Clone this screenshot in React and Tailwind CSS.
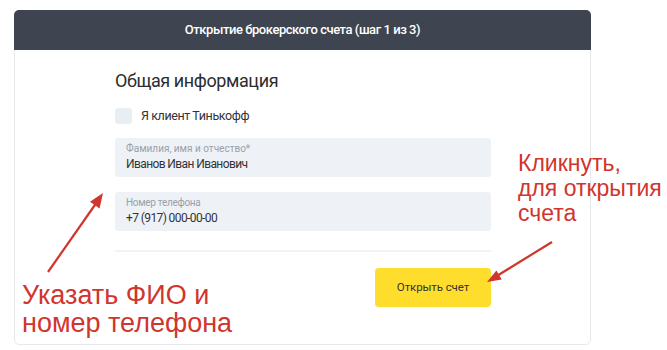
export default function App() {
  return (
    <div className="relative h-[350px] w-[667px] overflow-hidden bg-white pl-[14px] pt-[10px] font-['Roboto',sans-serif]">
      <div className="flex h-[335px] w-[577px] flex-col rounded-[5px] border border-[#e6e8eb] bg-white">
        <div className="-mx-px -mt-px flex h-[40px] items-center justify-center rounded-t-[5px] bg-[#3e4450]">
          <span className="text-[13px] font-medium tracking-[-0.45px] text-white">
            Открытие брокерского счета (шаг 1 из 3)
          </span>
        </div>

        <div className="flex w-[476px] flex-col pl-[100px] pt-[19px]">
          <h2 className="text-[18px] leading-[24px] tracking-[-0.4px] text-[#2b2d31]">Общая информация</h2>

          <label className="mt-[15px] flex h-[16px] items-center gap-[9px]">
            <span className="h-[16px] w-[17px] rounded-[3px] bg-[#e9eef5]" />
            <span className="text-[12.5px] tracking-[-0.4px] text-[#333]">Я клиент Тинькофф</span>
          </label>

          <div className="mt-[14px] flex h-[39px] flex-col rounded-[3px] bg-[#eef2f7] pl-[11px] pt-[5px]">
            <span className="text-[10px] leading-[12px] text-[#9aa0a8]">Фамилия, имя и отчество*</span>
            <span className="mt-[1px] text-[12px] leading-[16px] tracking-[-0.6px] text-[#333]">Иванов Иван Иванович</span>
          </div>

          <div className="mt-[15px] flex h-[39px] flex-col rounded-[3px] bg-[#eef2f7] pl-[11px] pt-[5px]">
            <span className="text-[10px] leading-[12px] tracking-[-0.3px] text-[#9aa0a8]">Номер телефона</span>
            <span className="mt-[1px] text-[12px] leading-[16px] tracking-[-0.6px] text-[#333]">+7 (917) 000-00-00</span>
          </div>

          <div className="mt-[19px] h-[2px] bg-[#f0f2f4]" />

          <div className="mt-[16px] flex justify-end">
            <button
              type="button"
              className="h-[39px] w-[116px] rounded-[4px] bg-[#ffdd2d] text-[11.5px] tracking-[-0.1px] text-[#333]"
            >
              Открыть счет
            </button>
          </div>
        </div>
      </div>

      <div className="absolute left-[518px] top-[151px] font-['Liberation_Sans',Arial,sans-serif] text-[23px] leading-[25px] text-[#d0352e]">
        <div>Кликнуть,</div>
        <div>для открытия</div>
        <div>счета</div>
      </div>

      <div className="absolute left-[22px] top-[281px] font-['Liberation_Sans',Arial,sans-serif] text-[27px] leading-[28px] text-[#d0352e]">
        <div>Указать ФИО и</div>
        <div>номер телефона</div>
      </div>

      <svg className="pointer-events-none absolute left-0 top-0" width="667" height="350" viewBox="0 0 667 350">
        <line x1="48" y1="272" x2="97" y2="202" stroke="#d0352e" strokeWidth="2.2" />
        <polygon points="103,193 99.6,208.5 90,201.8" fill="#d0352e" />
        <line x1="552" y1="242" x2="496" y2="276.5" stroke="#d0352e" strokeWidth="2.2" />
        <polygon points="487,282 501.8,279.4 496.4,270.4" fill="#d0352e" />
      </svg>
    </div>
  );
}
